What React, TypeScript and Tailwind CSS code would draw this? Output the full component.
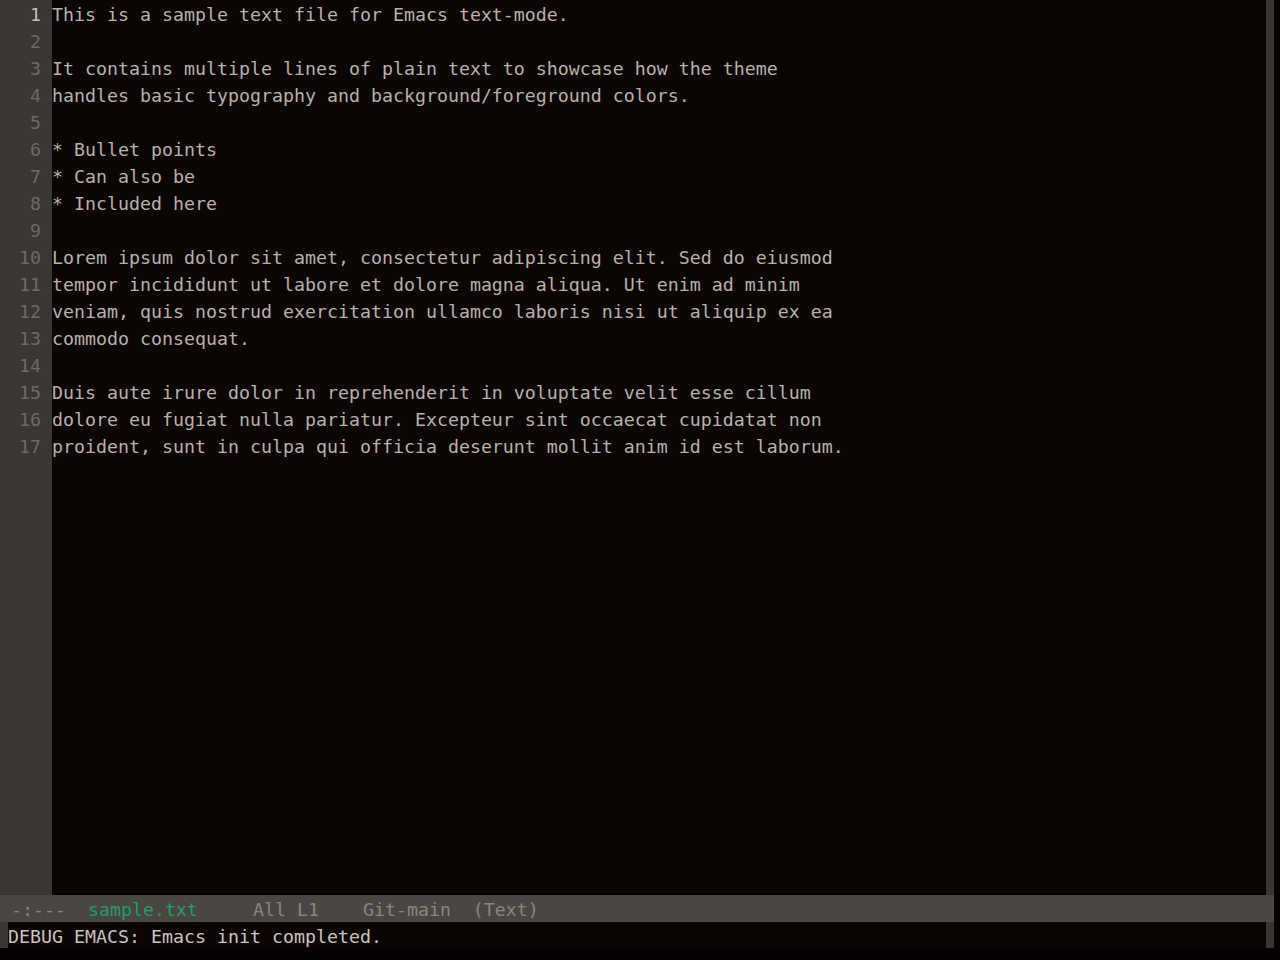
const lines = [
  "This is a sample text file for Emacs text-mode.",
  "",
  "It contains multiple lines of plain text to showcase how the theme",
  "handles basic typography and background/foreground colors.",
  "",
  "* Bullet points",
  "* Can also be",
  "* Included here",
  "",
  "Lorem ipsum dolor sit amet, consectetur adipiscing elit. Sed do eiusmod",
  "tempor incididunt ut labore et dolore magna aliqua. Ut enim ad minim",
  "veniam, quis nostrud exercitation ullamco laboris nisi ut aliquip ex ea",
  "commodo consequat.",
  "",
  "Duis aute irure dolor in reprehenderit in voluptate velit esse cillum",
  "dolore eu fugiat nulla pariatur. Excepteur sint occaecat cupidatat non",
  "proident, sunt in culpa qui officia deserunt mollit anim id est laborum.",
];

const mono = "font-['DejaVu_Sans_Mono',monospace] text-[18.27px] leading-[27px]";

export default function App() {
  return (
    <div className={`w-[1280px] h-[960px] bg-[#050302] flex flex-col overflow-hidden ${mono}`}>
      <div className="w-[1274px] flex flex-col">
        {/* editor window */}
        <div className="h-[895px] flex bg-[#0b0604]">
          <div className="w-[52px] bg-[#3a3633] flex flex-col items-end pr-[11px] pt-px">
            {lines.map((_, i) => (
              <div key={i} className={i === 0 ? "text-[#c4beb8]" : "text-[#6f6a66]"}>
                {i + 1}
              </div>
            ))}
          </div>
          <div className="flex-1 flex flex-col text-[#b7b1aa] whitespace-pre pt-px">
            {lines.map((l, i) => (
              <div key={i} className="h-[27px]">{l}</div>
            ))}
          </div>
          <div className="w-[8px] bg-[#3a3633]" />
        </div>
        {/* mode line */}
        <div className="h-[27px] bg-[#4a4642] flex items-center pl-[11px] pt-[2px] text-[#8b8580] whitespace-pre">
          <span>-:---  </span>
          <span className="text-[#1e9e6b]">sample.txt</span>
          <span>     All L1    Git-main  (Text)</span>
        </div>
        {/* minibuffer */}
        <div className="h-[26px] flex bg-[#0b0604]">
          <div className="w-[8px] bg-[#3a3633]" />
          <div className="flex-1 flex items-center pt-[2px] text-[#c9c3bc]">DEBUG EMACS: Emacs init completed.</div>
          <div className="w-[8px] bg-[#3a3633]" />
        </div>
      </div>
    </div>
  );
}
